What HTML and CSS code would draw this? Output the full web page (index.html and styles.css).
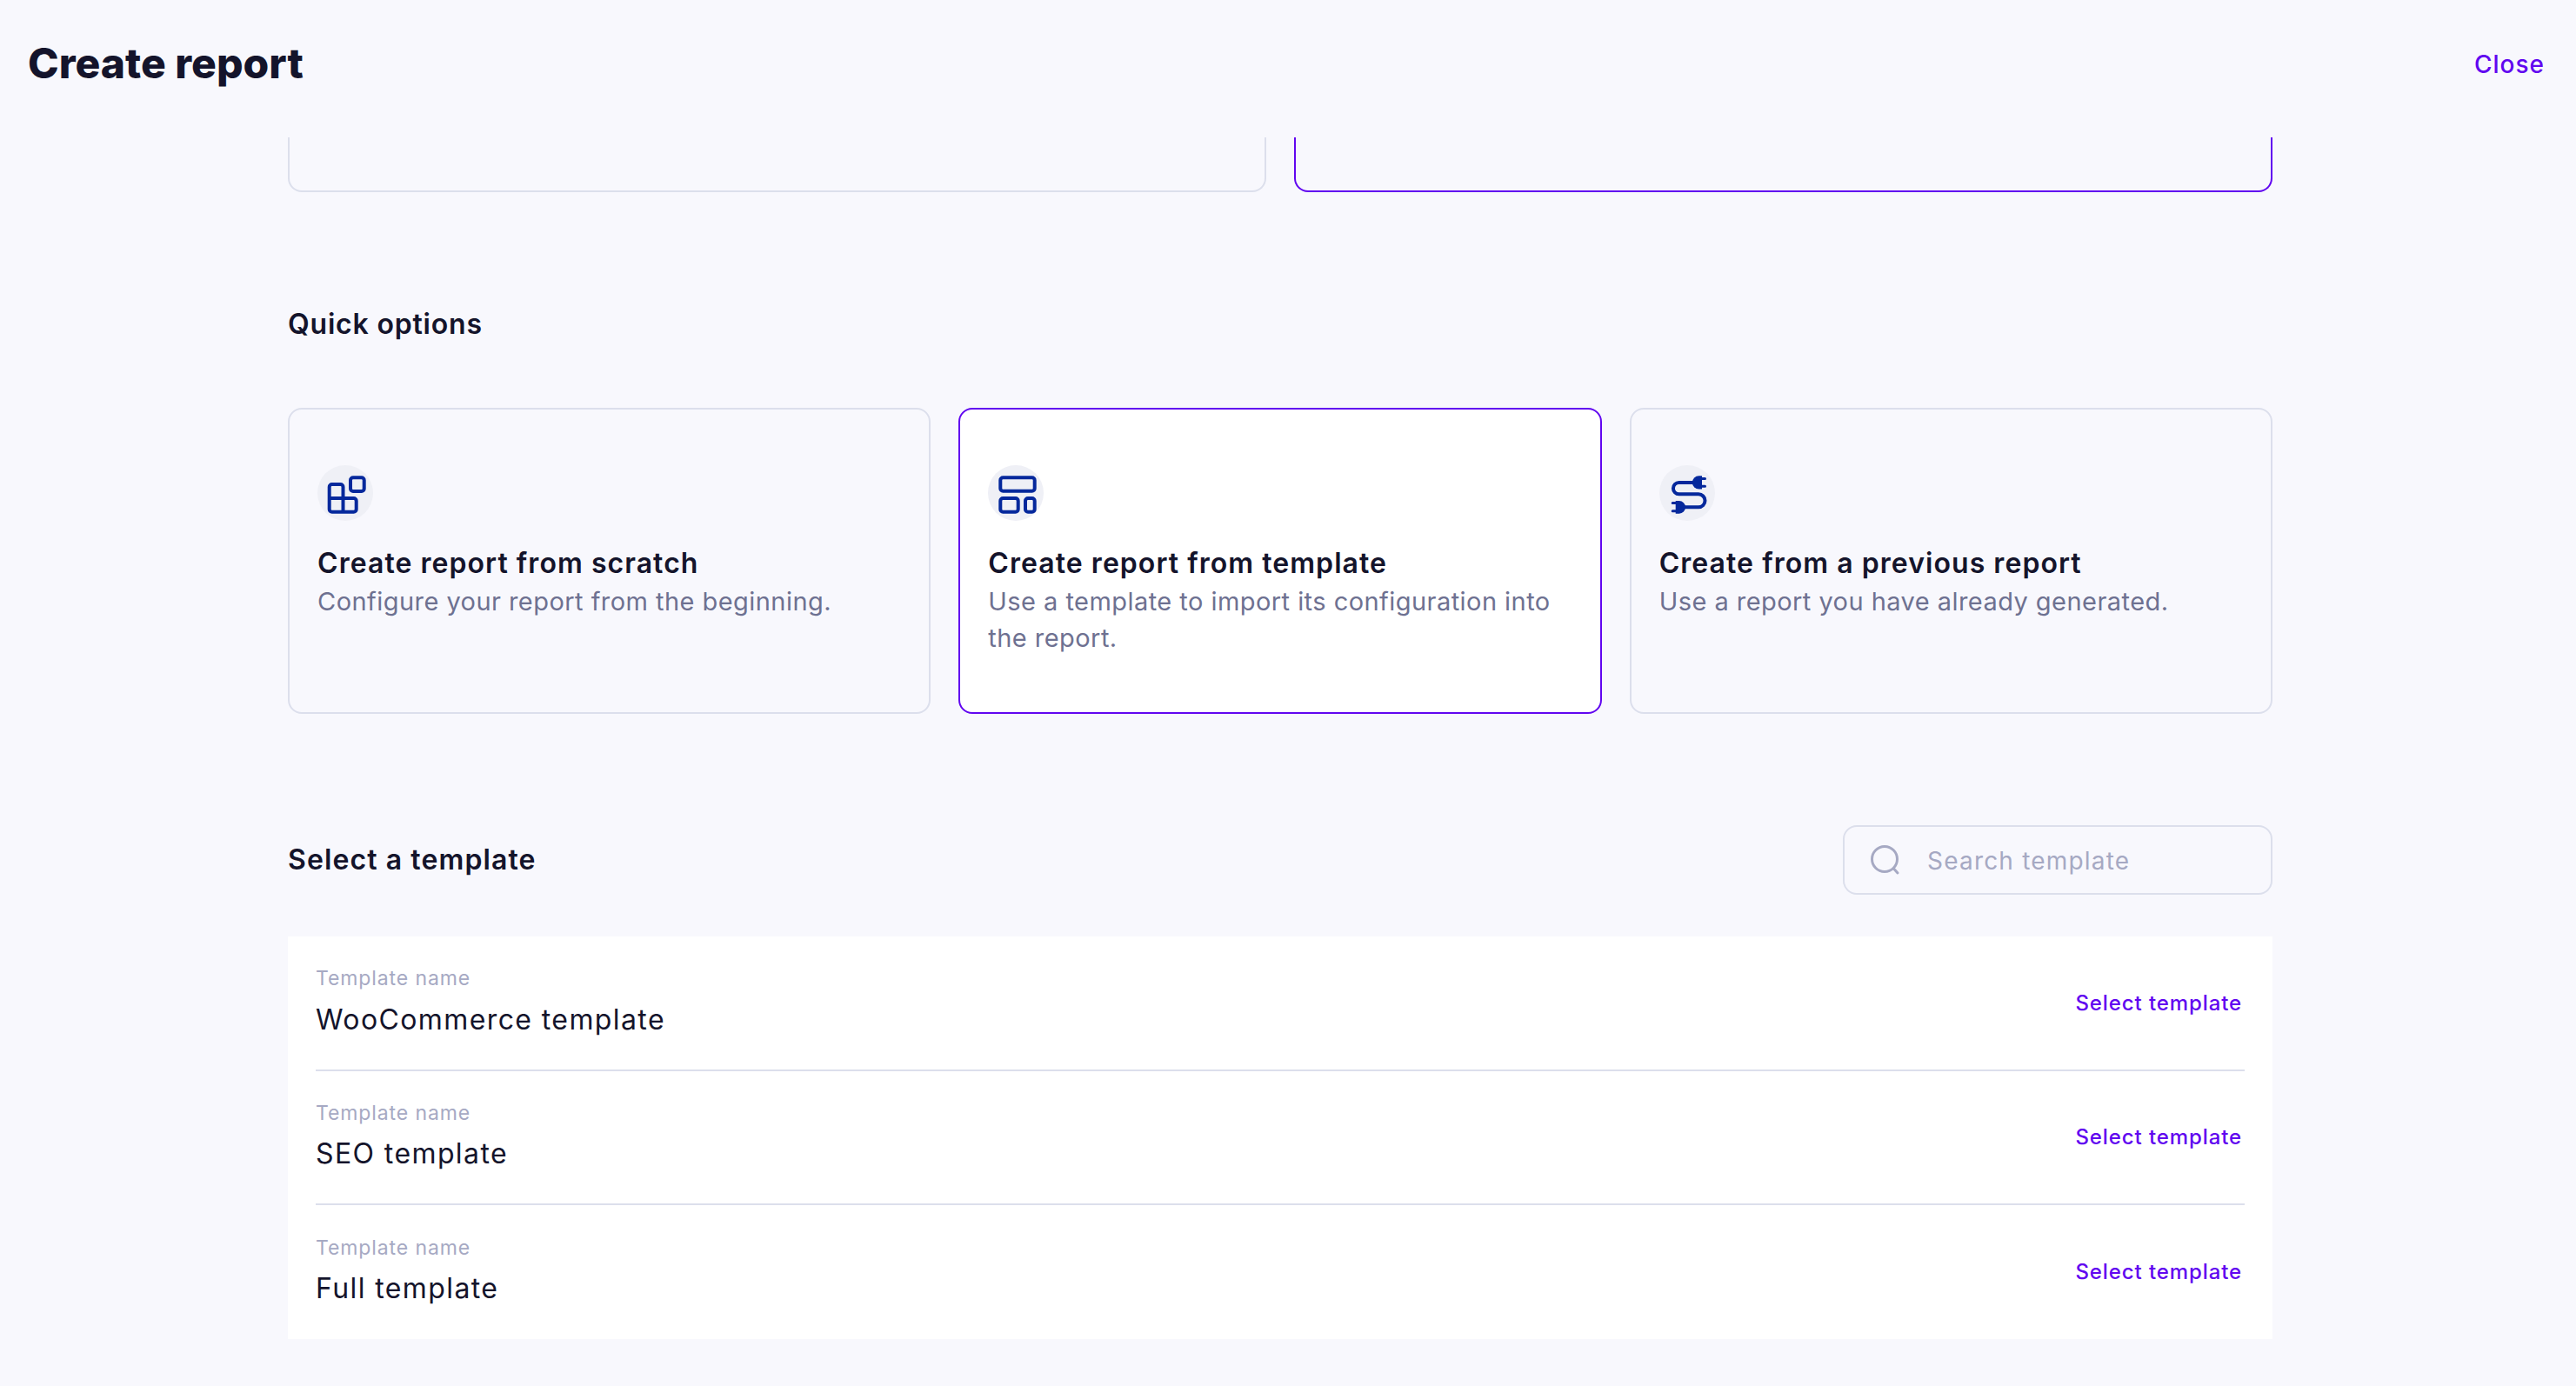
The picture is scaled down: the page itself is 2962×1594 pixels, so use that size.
FILE: index.html
```html
<!DOCTYPE html>
<html>
<head>
    <title>Create report</title>
    <link rel="stylesheet" href="styles.css">
</head>
<body>
    <header class="header">
        <h1 class="page-title">Create report</h1>
        <a class="close-link">Close</a>
    </header>

    <main class="content">
        <div class="top-row">
            <div class="top-card"></div>
            <div class="top-card top-card-selected"></div>
        </div>

        <h2 class="section-title quick-title">Quick options</h2>

        <div class="cards">
            <div class="card">
                <div class="card-icon">
                    <svg viewBox="0 0 64 64" width="64" height="64" fill="none" stroke="#05289c" stroke-width="4" stroke-linejoin="round">
                        <path d="M13.7 25a3 3 0 0 1 3-3h9.8a3 3 0 0 1 3 3v13h12.2a3 3 0 0 1 3 3v9.7a3 3 0 0 1-3 3H16.7a3 3 0 0 1-3-3z"/>
                        <path d="M13.7 38h15.8v15.7"/>
                        <rect x="38" y="14.3" width="15.7" height="15.7" rx="3"/>
                    </svg>
                </div>
                <h3 class="card-title">Create report from scratch</h3>
                <p class="card-text">Configure your report from the beginning.</p>
            </div>
            <div class="card card-selected">
                <div class="card-icon">
                    <svg viewBox="0 0 64 64" width="64" height="64" fill="none" stroke="#05289c" stroke-width="4">
                        <rect x="14.3" y="14.3" width="39.4" height="15.4" rx="3"/>
                        <rect x="14.3" y="38" width="20.4" height="15.7" rx="3"/>
                        <rect x="43" y="38" width="10.7" height="15.7" rx="3"/>
                    </svg>
                </div>
                <h3 class="card-title">Create report from template</h3>
                <p class="card-text">Use a template to import its configuration into the report.</p>
            </div>
            <div class="card">
                <div class="card-icon">
                    <svg viewBox="0 0 64 64" width="64" height="64" fill="none" stroke="#05289c" stroke-width="4" stroke-linecap="round">
                        <path d="M40 20H22.6a6.65 6.65 0 0 0 0 13.3H45a7.5 7.5 0 0 1 0 15H28"/>
                        <path d="M49 12.3V27.5H45.5A7.6 7.6 0 0 1 45.5 12.3z" fill="#05289c" stroke="none"/>
                        <path d="M49 15.5h3.5M49 24.3h3.5" stroke-width="3"/>
                        <path d="M18.7 41V55.7H22.7A7.35 7.35 0 0 0 22.7 41z" fill="#05289c" stroke="none"/>
                        <path d="M18.7 43.5h-3.5M18.7 52.8h-3.5" stroke-width="3"/>
                    </svg>
                </div>
                <h3 class="card-title">Create from a previous report</h3>
                <p class="card-text">Use a report you have already generated.</p>
            </div>
        </div>

        <div class="select-row">
            <h2 class="section-title">Select a template</h2>
            <div class="search">
                <svg viewBox="0 0 36 36" width="36" height="36" fill="none" stroke="#a6a9c3" stroke-width="3" stroke-linecap="round">
                    <circle cx="17" cy="17" r="14.5"/>
                    <path d="M27.5 28l4.5 5"/>
                </svg>
                <span class="search-text">Search template</span>
            </div>
        </div>

        <div class="template-list">
            <div class="template-row">
                <div>
                    <div class="template-label">Template name</div>
                    <div class="template-name">WooCommerce template</div>
                </div>
                <a class="select-link">Select template</a>
            </div>
            <div class="template-row">
                <div>
                    <div class="template-label">Template name</div>
                    <div class="template-name">SEO template</div>
                </div>
                <a class="select-link">Select template</a>
            </div>
            <div class="template-row">
                <div>
                    <div class="template-label">Template name</div>
                    <div class="template-name">Full template</div>
                </div>
                <a class="select-link">Select template</a>
            </div>
        </div>
    </main>
</body>
</html>
```

FILE: styles.css
```css
* { box-sizing: border-box; }
html, body { height: 100%; }
body { margin: 0; overflow: hidden; background: #f8f8fd; color: #14142b; font-family: "Inter", "Liberation Sans", sans-serif; }

.header { height: 158px; display: flex; justify-content: space-between; align-items: flex-start; padding: 0 36px 0 32px; }
.page-title { margin: 45px 0 0; font-size: 48px; line-height: 56px; font-weight: 800; }
.close-link { margin-top: 56px; font-size: 28px; line-height: 36px; font-weight: 500; letter-spacing: 1px; color: #6106f0; }

.content { padding: 0 349px 0 331px; }

.top-row { display: grid; grid-template-columns: 1fr 1fr; gap: 32px; }
.top-card { height: 63px; border: 2px solid #dcdfec; border-top: none; border-radius: 0 0 16px 16px; }
.top-card-selected { border-color: #6106f0; }

.section-title { margin: 0; font-size: 32px; line-height: 40px; font-weight: 600; letter-spacing: 1.1px; }
.quick-title { margin: 132px 0 0; height: 116px; letter-spacing: 0.8px; }

.cards { display: grid; grid-template-columns: repeat(3, 1fr); gap: 32px; }
.card { height: 352px; padding: 64px 32px 0; border: 2px solid #dcdfec; border-radius: 16px; }
.card-selected { background: #fff; border-color: #6106f0; }
.card-icon { width: 64px; height: 64px; border-radius: 50%; background: #eff0f6; }
.card-icon svg { display: block; }
.card-title { margin: 28px 0 0; font-size: 32px; line-height: 42px; font-weight: 600; letter-spacing: 1.05px; }
.card-text { margin: 2px 0 0; font-size: 29px; line-height: 42px; letter-spacing: 0.45px; color: #6e7191; }

.select-row { margin-top: 128px; height: 80px; display: flex; justify-content: space-between; align-items: center; }
.search { width: 494px; height: 80px; display: flex; align-items: center; gap: 30px; padding-left: 29px; border: 2px solid #dcdfec; border-radius: 16px; }
.search-text { padding-top: 2px; font-size: 28px; letter-spacing: 1.2px; color: #a6a9c3; }

.template-list { margin-top: 48px; padding: 0 32px; background: #fff; }
.template-row { height: 154.5px; display: flex; justify-content: space-between; align-items: center; padding-right: 3px; border-bottom: 2px solid #dcdfec; }
.template-row:last-child { height: 153.5px; border-bottom: none; }
.template-label { margin-top: -2.5px; font-size: 23px; line-height: 30px; letter-spacing: 0.9px; color: #a6a9c3; }
.template-name { margin-top: 11.5px; font-size: 32px; line-height: 42px; letter-spacing: 1.4px; }
.select-link { font-size: 24px; font-weight: 500; letter-spacing: 0.9px; color: #6106f0; }
```
